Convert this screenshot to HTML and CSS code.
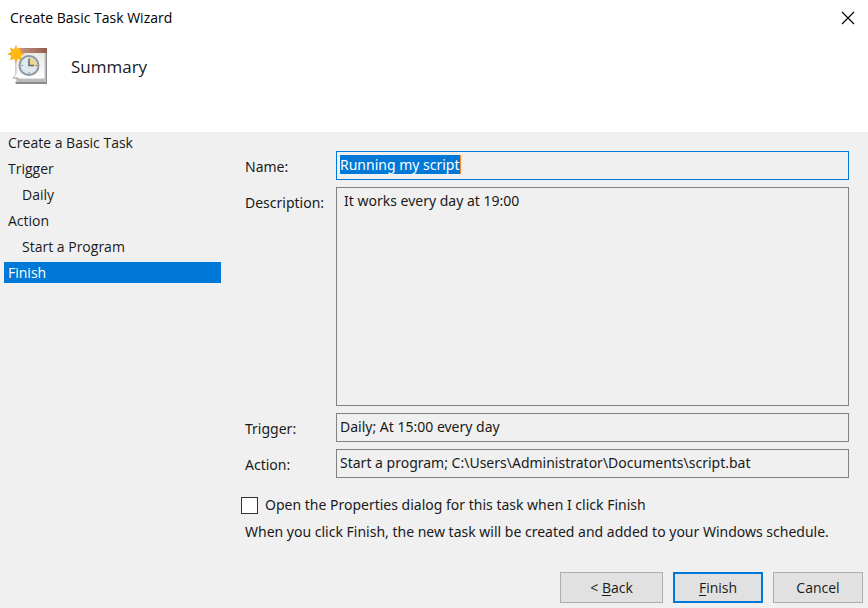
FILE: index.html
```html
<!DOCTYPE html>
<html lang="en">
<head>
    <meta charset="UTF-8">
    <title>Create Basic Task Wizard</title>
    <link rel="stylesheet" href="styles.css">
</head>
<body>

    <header>
        <div class="titlebar">
            <span>Create Basic Task Wizard</span>
            <button type="button" class="close" aria-label="Close">
                <svg width="14" height="14" viewBox="0 0 14 14">
                    <path d="M1 1L13 13M13 1L1 13" stroke="#000" stroke-width="1.2"/>
                </svg>
            </button>
        </div>
        <div class="heading">
            <!-- calendar page with a clock and a "new" star -->
            <svg class="task-icon" width="42" height="42" viewBox="0 0 42 42">
                <defs>
                    <linearGradient id="page" x1="0" y1="0" x2="0" y2="1">
                        <stop offset="0" stop-color="#e9e7e7"/>
                        <stop offset="1" stop-color="#ffffff"/>
                    </linearGradient>
                    <linearGradient id="bar" x1="0" y1="0" x2="1" y2="0">
                        <stop offset="0" stop-color="#c89684"/>
                        <stop offset="1" stop-color="#925d4e"/>
                    </linearGradient>
                    <radialGradient id="star">
                        <stop offset="0" stop-color="#ffd21c"/>
                        <stop offset="1" stop-color="#f39a10"/>
                    </radialGradient>
                </defs>
                <path d="M8 36h31V5l1 1v32H9z" fill="#8b8b8b"/>
                <path d="M8 7h31v29H9z" fill="#c8c8c8"/>
                <path d="M9 6h29v27H12l-6-1 3-4z" fill="url(#page)" stroke="#aaa" stroke-width=".7"/>
                <path d="M6 32h5l1 3h26" fill="none" stroke="#aaa" stroke-width="1"/>
                <path d="M11 2h29v5H11z" fill="url(#bar)"/>
                <circle cx="22" cy="19.500" r="9.500" fill="#dfe8ef" stroke="#8d979e" stroke-width="2"/>
                <path d="M22 19.500V11.500A8 8 0 0 1 29.500 21z" fill="#f0d58e"/>
                <path d="M22 12.500V19.500H27" fill="none" stroke="#5d6871" stroke-width="1.500"/>
                <path d="M22 26v1.500M14.500 19.500h1.500M28.500 19.500h1.500" stroke="#75818a"/>
                <path d="M9 -1L10.600 3.600L15 1.500L13.200 5.900L18 8L13.200 9.800L15 14.300L10.600 12.500L9 17L7.200 12.500L2.700 14.300L4.600 9.800L0 8L4.600 5.900L2.700 1.500L7.200 3.600Z" fill="url(#star)"/>
                <circle cx="9" cy="8" r="5.500" fill="#ffb90f"/>
            </svg>
            <h1>Summary</h1>
        </div>
    </header>

    <main>
        <ul class="steps">
            <li>Create a Basic Task</li>
            <li>Trigger</li>
            <li class="sub">Daily</li>
            <li>Action</li>
            <li class="sub">Start a Program</li>
            <li class="current">Finish</li>
        </ul>

        <form id="summary">
            <div class="fields">
                <label for="name">Name:</label>
                <div class="name-box">
                    <input type="text" id="name" value="Running my script" readonly>
                    <span class="caret"></span>
                </div>

                <label for="description">Description:</label>
                <textarea id="description" readonly>It works every day at 19:00</textarea>

                <label for="trigger">Trigger:</label>
                <input type="text" id="trigger" value="Daily; At 15:00 every day" readonly>

                <label for="action">Action:</label>
                <input type="text" id="action" value="Start a program; C:\Users\Administrator\Documents\script.bat" readonly>
            </div>

            <div class="option">
                <input type="checkbox" id="openProps">
                <label for="openProps">Open the Properties dialog for this task when I click Finish</label>
            </div>
            <p class="note">When you click Finish, the new task will be created and added to your Windows schedule.</p>
        </form>
    </main>

    <footer>
        <button type="button" class="back">&lt; <u>B</u>ack</button>
        <button type="submit" form="summary" class="default"><u>F</u>inish</button>
        <button type="button">Cancel</button>
    </footer>

    <script>
        // the name is selected when the page opens
        const nameInput = document.getElementById("name");
        nameInput.focus();
        nameInput.select();
    </script>
</body>
</html>
```
FILE: styles.css
```css
* {
    box-sizing: border-box;
}

body {
    margin: 0;
    min-height: 100vh;
    display: flex;
    flex-direction: column;
    background-color: #f0f0f0;
    color: #1a1a1a;
    font-family: "Open Sans", "Noto Sans", sans-serif;
    font-size: 14px;
    line-height: 20px;
}

button,
input,
textarea {
    font: inherit;
    color: inherit;
}

header {
    background-color: white;
    padding-bottom: 44px;
}

.titlebar {
    display: flex;
    justify-content: space-between;
    align-items: center;
    height: 36px;
    padding: 0 10px;
    color: black;
}

.close {
    display: flex;
    padding: 3px;
    border: none;
    background: none;
}

.heading {
    display: flex;
    align-items: center;
    gap: 22px;
    padding: 10px 7px 0;
}

.task-icon {
    overflow: visible;
}

h1 {
    margin: 0;
    font-size: 17px;
    font-weight: normal;
}

main {
    flex: 1;
    display: flex;
    gap: 24px;
    padding: 0 19px 0 4px;
}

.steps {
    flex: 0 0 217px;
    display: flex;
    flex-direction: column;
    gap: 5px;
    margin: 0;
    padding: 0;
    list-style: none;
}

.steps li {
    padding-left: 4px;
    line-height: 21px;
}

.steps .sub {
    padding-left: 18px;
}

.steps .current {
    background-color: #0078d7;
    color: white;
}

form {
    flex: 1;
    padding-top: 19px;
    font-family: "Noto Sans", "Open Sans", sans-serif;
}

.fields {
    display: grid;
    grid-template-columns: 91px 1fr;
    gap: 7px 0;
}

.fields label {
    padding-top: 6px;
}

.fields input,
.fields textarea {
    width: 100%;
    height: 29px;
    border: 1px solid #828282;
    background-color: #f0f0f0;
    padding: 0 3px 2px;
    outline: none;
}

.fields textarea {
    display: block;
    height: 219px;
    padding: 3px 7px;
    resize: none;
}

.fields input:focus {
    border-color: #0078d7;
}

::selection {
    background-color: #0078d7;
    color: white;
}

.name-box {
    position: relative;
    height: 29px;
}

.caret {
    position: absolute;
    left: 124px;
    top: 4px;
    width: 1px;
    height: 19px;
    background-color: #ff8728;
}

.option {
    display: flex;
    align-items: center;
    gap: 7px;
    margin: 17px 0 0 -4px;
}

.option input {
    appearance: none;
    width: 17px;
    height: 17px;
    margin: 0;
    border: 1px solid #333;
    background-color: white;
}

.note {
    margin: 7px 0 0;
}

footer {
    display: flex;
    justify-content: flex-end;
    gap: 10px;
    padding: 5px;
}

footer button {
    width: 90px;
    height: 31px;
    padding: 0;
    border: 1px solid #adadad;
    background-color: #e1e1e1;
}

footer .back {
    width: 103px;
}

footer .default {
    border: 2px solid #0078d7;
}

u {
    text-underline-offset: 2px;
}
```
